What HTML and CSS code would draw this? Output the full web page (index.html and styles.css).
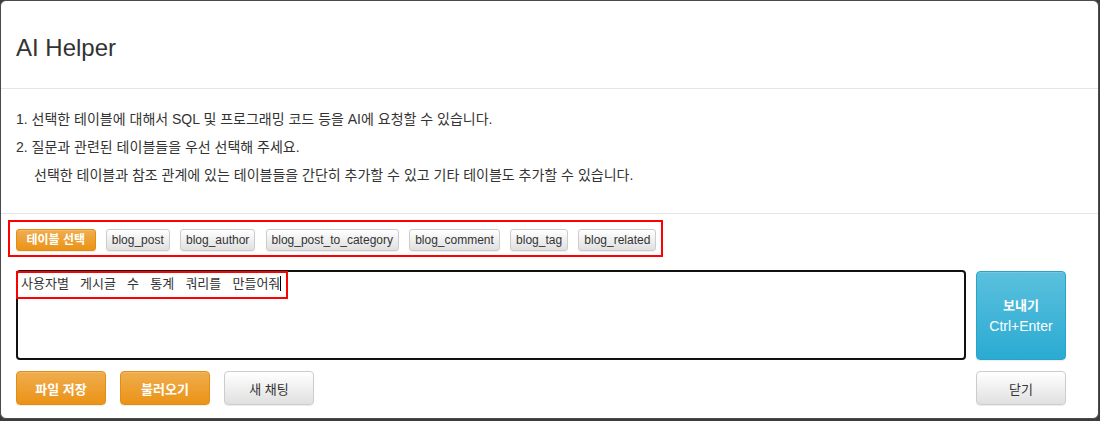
FILE: index.html
```html
<!DOCTYPE html>
<html lang="ko">
<head>
<meta charset="utf-8">
<title>AI Helper</title>
<link rel="stylesheet" href="styles.css">
</head>
<body>
<div class="modal">
  <div class="modal-header">
    <h4 class="modal-title">AI Helper</h4>
  </div>
  <div class="modal-body">
    <p>1. 선택한 테이블에 대해서 SQL 및 프로그래밍 코드 등을 AI에 요청할 수 있습니다.</p>
    <p>2. 질문과 관련된 테이블들을 우선 선택해 주세요.</p>
    <p class="indent">선택한 테이블과 참조 관계에 있는 테이블들을 간단히 추가할 수 있고 기타 테이블도 추가할 수 있습니다.</p>
  </div>
  <div class="tables-section">
    <div class="tables-box">
      <button class="tbtn tbtn-warning">테이블 선택</button>
      <button class="tbtn">blog_post</button>
      <button class="tbtn">blog_author</button>
      <button class="tbtn">blog_post_to_category</button>
      <button class="tbtn">blog_comment</button>
      <button class="tbtn">blog_tag</button>
      <button class="tbtn">blog_related</button>
    </div>
  </div>
  <div class="chat">
    <div class="prompt-wrap">
      <div class="prompt">사용자별 게시글 수 통계 쿼리를 만들어줘<span class="caret"></span></div>
      <div class="highlight"></div>
    </div>
    <button class="btn btn-info send"><span>보내기</span><span>Ctrl+Enter</span></button>
    <div class="left-actions">
      <button class="btn btn-warning">파일 저장</button>
      <button class="btn btn-warning">불러오기</button>
      <button class="btn btn-default">새 채팅</button>
    </div>
    <button class="btn btn-default">닫기</button>
  </div>
</div>
</body>
</html>
```
FILE: styles.css
```css
html, body {
  margin: 0;
  padding: 0;
}
body {
  background: #3c3c3c;
  font-family: "Liberation Sans", Arial, "Noto Sans CJK KR", sans-serif;
  color: #333;
  width: 1100px;
  height: 421px;
  overflow: hidden;
}
.modal {
  box-sizing: border-box;
  width: 1099px;
  height: 419px;
  background: #fff;
  border: 1px solid #4a4a4a;
  border-radius: 6px;
}
.modal-header {
  height: 87px;
  border-bottom: 1px solid #e5e5e5;
  display: flex;
  align-items: center;
  padding: 0 15px;
}
.modal-title {
  margin: 0;
  font-size: 24px;
  font-weight: normal;
  line-height: 27px;
  color: #333;
  padding-top: 5px;
}
.modal-body {
  padding: 16px 15px 24px;
  border-bottom: 1px solid #e5e5e5;
}
.modal-body p {
  margin: 0;
  font-size: 14px;
  line-height: 28px;
  color: #333;
}
.modal-body p.indent {
  padding-left: 18px;
}
.tables-section {
  padding: 6px 0 0 7px;
}
.tables-box {
  display: inline-flex;
  gap: 10.2px;
  border: 2px solid #f00;
  padding: 7px 5px 4px 6px;
}
.tbtn {
  font-family: "Liberation Sans", Arial, "Noto Sans CJK KR", sans-serif;
  font-size: 12px;
  height: 22px;
  padding: 0 5px;
  line-height: 20px;
  color: #333;
  border: 1px solid #ccc;
  border-radius: 3px;
  background: linear-gradient(#fff, #e0e0e0);
  box-shadow: inset 0 1px 0 rgba(255,255,255,.15), 0 1px 1px rgba(0,0,0,.075);
}
.tbtn-warning {
  color: #fff;
  font-weight: bold;
  border-color: #e38d13;
  background: linear-gradient(#f0ad4e, #eb9316);
  padding: 0 9.5px;
}
.chat {
  display: grid;
  grid-template-columns: 950px 90px;
  column-gap: 10px;
  row-gap: 11px;
  padding: 13px 31px 0 15px;
}
.prompt-wrap {
  position: relative;
  height: 90px;
}
.prompt {
  box-sizing: border-box;
  height: 90px;
  border: 2px solid #111;
  border-radius: 4px;
  padding: 4px 0 0 3px;
  font-family: "Liberation Mono", "Noto Sans CJK KR", monospace;
  font-size: 13px;
  line-height: 18px;
  word-spacing: 3.4px;
  color: #333;
}
.caret {
  display: inline-block;
  width: 1px;
  height: 15px;
  background: #000;
  vertical-align: -3px;
}
.highlight {
  position: absolute;
  left: 0;
  top: 1px;
  width: 272px;
  height: 28px;
  box-sizing: border-box;
  border: 2px solid #f00;
}
.btn {
  font-family: "Liberation Sans", Arial, "Noto Sans CJK KR", sans-serif;
  font-size: 13px;
  height: 34px;
  width: 90px;
  border-radius: 4px;
  border: 1px solid #ccc;
  color: #333;
  background: linear-gradient(#fff, #e0e0e0);
  box-shadow: inset 0 1px 0 rgba(255,255,255,.15), 0 1px 1px rgba(0,0,0,.075);
  padding: 0;
}
.btn-warning {
  color: #fff;
  font-weight: bold;
  border-color: #e38d13;
  background: linear-gradient(#f0ad4e, #eb9316);
}
.btn-info {
  color: #fff;
  border-color: #28a4c9;
  background: linear-gradient(#5bc0de, #2aabd2);
}
.send {
  height: 89px;
  margin-top: 1px;
  display: flex;
  flex-direction: column;
  align-items: center;
  justify-content: center;
  line-height: 21px;
  font-weight: bold;
}
.send span:last-child {
  font-weight: normal;
  font-size: 14px;
}
.left-actions {
  display: flex;
  gap: 14px;
}
.btn-default {
  font-weight: normal;
}
```
